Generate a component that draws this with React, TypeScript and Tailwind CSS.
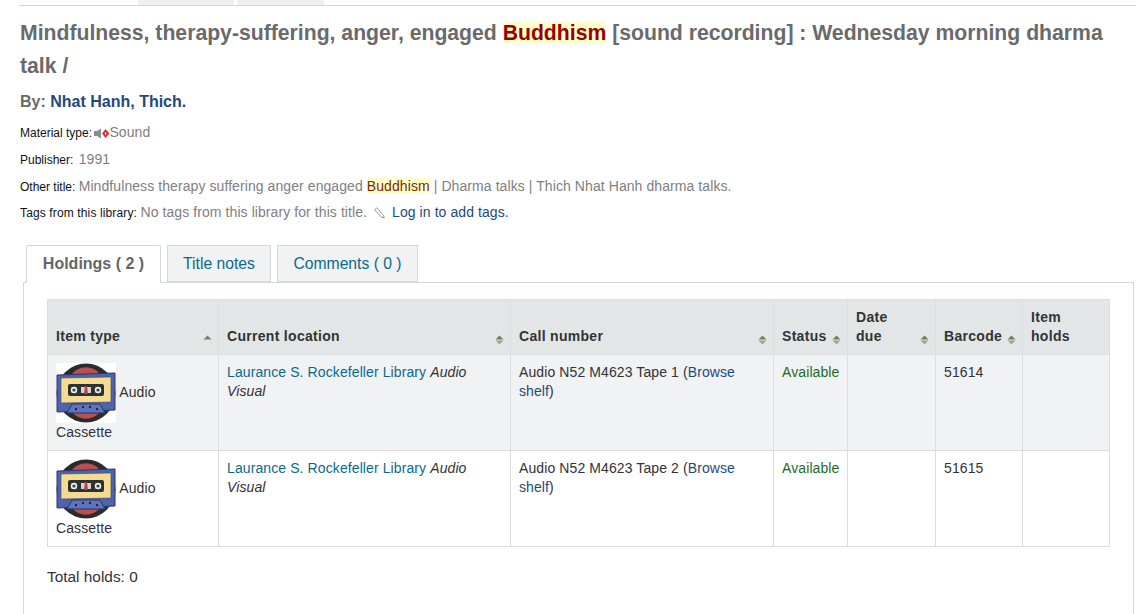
import React from 'react';

function SortIcon({ dir = 'both' }: { dir?: 'both' | 'up' }) {
  return (
    <svg width="9" height="10" viewBox="0 0 9 10" className="-mr-[2px] mb-[1px] shrink-0">
      <path d="M4.5 0.5 L8.5 4.5 L0.5 4.5 Z" fill="#77805c" />
      {dir === 'both' && <path d="M0.5 5.5 L8.5 5.5 L4.5 9.5 Z" fill="#a3a586" />}
    </svg>
  );
}

function PencilIcon() {
  return (
    <svg width="11" height="12" viewBox="0 0 11 12" className="mx-[3px] inline-block">
      <path d="M0.7 2.8 L2.8 0.8 L9.3 8.2 L10.3 11 L7.4 10.2 Z" fill="#fff" stroke="#8a8a8a" strokeWidth="0.9" strokeLinejoin="round" />
    </svg>
  );
}

function CassetteIcon() {
  return (
    <svg width="60" height="60" viewBox="0 0 60 60" className="inline-block align-middle bg-white">
      <circle cx="30" cy="30" r="29.5" fill="#2b2a2c" />
      <path d="M16 11 A18 18 0 0 1 44 11 Z" fill="#b9504c" />
      <path d="M16 49 A18 18 0 0 0 44 49 Z" fill="#b9504c" />
      <path d="M1 12 L59 10 L59 47 L1 49 Z" fill="#4f63ad" stroke="#2c3566" strokeLinejoin="round" />
      <path d="M5 15 L55 14 L55 39 L5 40 Z" fill="#f3dc8f" stroke="#3c4470" strokeWidth="0.6" />
      <rect x="12" y="21" width="36" height="12" rx="2" fill="#2e3038" />
      <circle cx="18" cy="27" r="4" fill="#e8e8e8" stroke="#222" />
      <circle cx="18" cy="27" r="1.6" fill="#444" />
      <circle cx="42" cy="27" r="4" fill="#e8e8e8" stroke="#222" />
      <circle cx="42" cy="27" r="1.6" fill="#444" />
      <rect x="25" y="24" width="10" height="6" fill="#d8d3c4" />
      <path d="M29 23 L31 23 L32 31 L28 31 Z" fill="#b5443c" />
      <path d="M11 50 L16 41 L44 41 L49 50 Z" fill="#5e72c0" stroke="#2c3566" />
      <circle cx="20" cy="46" r="1.2" fill="#1f2440" />
      <circle cx="27" cy="44" r="1.2" fill="#1f2440" />
      <circle cx="34" cy="44" r="1.2" fill="#1f2440" />
      <circle cx="41" cy="46" r="1.2" fill="#1f2440" />
    </svg>
  );
}

function SoundIcon() {
  return (
    <svg width="16" height="11" viewBox="0 0 16 11" className="-mx-px inline-block">
      <path d="M0 3 H3 L7 0.5 V10.5 L3 8 H0 Z" fill="#8b8b8b" />
      <path d="M8 5.5 L11.5 1 L15.5 5.5 L11.5 10 Z" fill="#d0343c" />
      <path d="M11 3.8 L12.6 5.5 L11 7.2 Z" fill="#fff" />
    </svg>
  );
}

const rows = [
  { tape: 'Tape 1', barcode: '51614', bg: 'bg-[#f0f2f3]' },
  { tape: 'Tape 2', barcode: '51615', bg: 'bg-white' },
];

export default function App() {
  return (
    <div className="relative h-[614px] w-[1146px] overflow-hidden bg-white font-['Liberation_Sans',Arial,sans-serif] text-[14px] text-[#333]">
      {/* leftover of the tabs above this section */}
      <div className="ml-[19px] mr-[10px] flex h-[6px] border-b border-[#d8d8d8] pl-[119px]">
        <div className="h-[5px] w-[96px] bg-[#eff0f1]" />
        <div className="ml-[3px] h-[5px] w-[87px] bg-[#eff0f1]" />
      </div>

      <div className="pl-5 pr-[30px] pt-[10px]">
        <h1 className="text-[21.2px] font-bold leading-[33px] text-[#6a6a6a]">
          Mindfulness, therapy-suffering, anger, engaged{' '}
          <span className="bg-[#ffffcc] text-[#990000]">Buddhism</span> [sound recording] : Wednesday morning dharma talk /
        </h1>
        <h5 className="mt-[10px] text-[16px] font-bold leading-[20px] text-[#6a6a6a]">
          By: <a className="text-[#1f4a78]">Nhat Hanh, Thich.</a>
        </h5>
        <div className="mt-[12px] text-[14px] leading-[17px] tracking-[0.08px] text-[#808080]">
          <div className="h-[27px]">
            <span className="text-[12px] tracking-normal text-[#111]">Material type: </span>
            <SoundIcon />
            <span>Sound</span>
          </div>
          <div className="h-[27px]">
            <span className="text-[12px] tracking-normal text-[#111]">Publisher: </span>
            <span className="ml-[2px]">1991</span>
          </div>
          <div className="h-[26px]">
            <span className="text-[12px] tracking-normal text-[#111]">Other title: </span>
            Mindfulness therapy suffering anger engaged{' '}
            <span className="bg-[#ffffcc] text-[#7a2a00]">Buddhism</span> | Dharma talks | Thich Nhat Hanh dharma talks.
          </div>
          <div className="h-[27px]">
            <span className="text-[12px] tracking-[0.13px] text-[#111]">Tags from this library: </span>
            No tags from this library for this title.{' '}
            <PencilIcon /> <a className="text-[#1f4a78]">Log in to add tags.</a>
          </div>
        </div>
      </div>

      <div className="mt-[14px] pl-[23px] pr-[12px]">
        <div className="relative z-10 -mb-px flex pl-[3px] text-[16px]">
          <div className="flex h-[38px] w-[135px] items-center justify-center rounded-t-[2px] border border-b-0 border-[#d8d8d8] bg-white pb-[2px] font-bold text-[#666]">
            Holdings ( 2 )
          </div>
          <div className="ml-[6px] flex h-[37px] w-[104px] items-center justify-center border border-[#d8d8d8] bg-[#f0f2f3] text-[15.7px] text-[#0b6a8a]">
            Title notes
          </div>
          <div className="ml-[6px] flex h-[37px] w-[141px] items-center justify-center border border-[#d8d8d8] bg-[#f0f2f3] text-[15.7px] text-[#0b6a8a]">
            Comments ( 0 )
          </div>
        </div>
        <div className="h-[360px] border border-[#d8d8d8] bg-white px-[23px] pt-[16px]">
          <table className="w-[1062px] table-fixed border-collapse text-[14px] leading-[19px] tracking-[0.1px] text-[#333]">
            <colgroup>
              <col className="w-[171px]" />
              <col className="w-[292px]" />
              <col className="w-[263px]" />
              <col className="w-[74px]" />
              <col className="w-[88px]" />
              <col className="w-[87px]" />
              <col className="w-[87px]" />
            </colgroup>
            <thead>
              <tr className="h-[55px] bg-[#e2e6e7] text-left align-bottom text-[14px] font-bold tracking-[0.3px] text-[#333]">
                {[
                  { label: 'Item type', dir: 'up' as const },
                  { label: 'Current location' },
                  { label: 'Call number' },
                  { label: 'Status' },
                  { label: 'Date due', narrow: true },
                  { label: 'Barcode' },
                ].map((h) => (
                  <th key={h.label} className="border border-[#dbdfe0] px-2 pb-2 font-bold">
                    <div className="flex items-end justify-between">
                      <span className={h.narrow ? 'w-min leading-[19px]' : 'leading-[19px]'}>{h.label}</span>
                      <SortIcon dir={h.dir ?? 'both'} />
                    </div>
                  </th>
                ))}
                <th className="border border-[#dbdfe0] px-2 pb-2 font-bold">Item holds</th>
              </tr>
            </thead>
            <tbody>
              {rows.map((r) => (
                <tr key={r.barcode} className={`h-[96px] align-top ${r.bg}`}>
                  <td className="border border-[#dcdcdc] px-2 pt-2">
                    <CassetteIcon /> Audio Cassette
                  </td>
                  <td className="border border-[#dcdcdc] px-2 pt-2">
                    <a className="text-[#0b6a8a]">Laurance S. Rockefeller Library</a> <i>Audio Visual</i>
                  </td>
                  <td className="border border-[#dcdcdc] px-2 pt-2">
                    Audio N52 M4623 {r.tape} (<a className="text-[#1f4a78]">Browse shelf</a>)
                  </td>
                  <td className="border border-[#dcdcdc] px-2 pt-2 text-[#1e6b1e]">Available</td>
                  <td className="border border-[#dcdcdc] px-2 pt-2" />
                  <td className="border border-[#dcdcdc] px-2 pt-2">{r.barcode}</td>
                  <td className="border border-[#dcdcdc] px-2 pt-2" />
                </tr>
              ))}
            </tbody>
          </table>
          <p className="mt-[20px] text-[15.4px] leading-[20px] text-[#333]">Total holds: 0</p>
        </div>
      </div>
    </div>
  );
}
